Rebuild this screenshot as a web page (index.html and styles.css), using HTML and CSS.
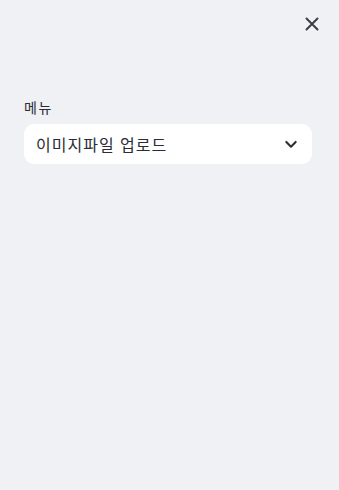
FILE: index.html
```html
<!DOCTYPE html>
<html lang="ko">
<head>
<meta charset="utf-8">
<link rel="stylesheet" href="styles.css">
</head>
<body>
<div class="panel">
  <div class="topbar">
    <button class="close" aria-label="닫기">
      <svg width="24" height="24" viewBox="0 0 24 24" fill="none" stroke="currentColor" stroke-width="2" stroke-linecap="round"><path d="M6.5 6.5l11 11M17.5 6.5l-11 11"/></svg>
    </button>
  </div>
  <div class="form">
    <label class="label">메뉴</label>
    <div class="select">
      <span class="value">이미지파일 업로드</span>
      <svg class="chev" width="16" height="16" viewBox="0 0 24 24" fill="none" stroke="currentColor" stroke-width="3.2" stroke-linecap="round" stroke-linejoin="round"><path d="M19 9l-7 7-7-7"/></svg>
    </div>
  </div>
</div>
</body>
</html>
```
FILE: styles.css
```css
html, body {
  margin: 0;
  padding: 0;
  height: 100%;
}
body {
  background: #f0f1f5;
  font-family: "Noto Sans CJK KR", "Noto Sans", sans-serif;
  color: #1f2230;
}
.panel {
  display: flex;
  flex-direction: column;
}
.topbar {
  display: flex;
  justify-content: flex-end;
  padding: 12px 15px 0 0;
}
.close {
  width: 24px;
  height: 24px;
  padding: 0;
  border: 0;
  background: none;
  color: #3a3d48;
  display: flex;
}
.form {
  display: flex;
  flex-direction: column;
  gap: 7px;
  padding: 61px 27px 0 24px;
}
.label {
  font-size: 14px;
  line-height: 20px;
  color: #2a2c36;
  padding-left: 0;
  letter-spacing: 1.5px;
}
.select {
  height: 40px;
  background: #fff;
  border-radius: 10px;
  display: flex;
  align-items: center;
  justify-content: space-between;
  padding: 0 13px 0 12px;
  box-sizing: border-box;
}
.value {
  font-size: 16px;
  line-height: 20px;
  color: #2a2c36;
  letter-spacing: 1px;
}
.chev {
  color: #2e303a;
}
```
